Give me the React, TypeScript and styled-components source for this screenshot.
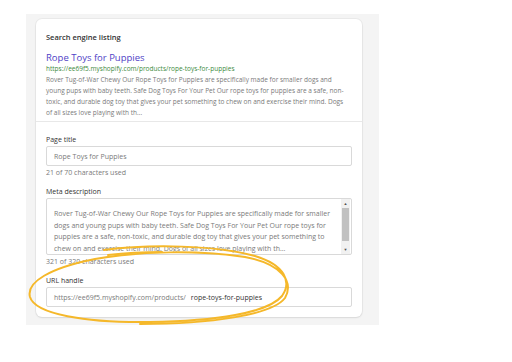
import { FC } from "react";
import styled, { createGlobalStyle } from "styled-components";

const GlobalStyle = createGlobalStyle`
  body {
    margin: 0;
    background: #ffffff;
    font-family: "Open Sans", "Liberation Sans", sans-serif;
  }
`;

const descLines = [
  "Rover Tug-of-War Chewy Our Rope Toys for Puppies are specifically made for smaller dogs and",
  "young pups with baby teeth. Safe Dog Toys For Your Pet Our rope toys for puppies are a safe, non-",
  "toxic, and durable dog toy that gives your pet something to chew on and exercise their mind. Dogs",
  "of all sizes love playing with th...",
];

const metaLines = [
  "Rover Tug-of-War Chewy Our Rope Toys for Puppies are specifically made for smaller",
  "dogs and young pups with baby teeth. Safe Dog Toys For Your Pet Our rope toys for",
  "puppies are a safe, non-toxic, and durable dog toy that gives your pet something to",
  "chew on and exercise their mind. Dogs of all sizes love playing with th...",
];

const App: FC = () => {
  return (
    <Page>
      <GlobalStyle />
      <Panel>
        <Card>
          <Preview>
            <Heading>Search engine listing</Heading>
            <PreviewTitle>Rope Toys for Puppies</PreviewTitle>
            <PreviewUrl>https://ee69f5.myshopify.com/products/rope-toys-for-puppies</PreviewUrl>
            <PreviewDesc>
              {descLines.map((l) => (
                <div key={l}>{l}</div>
              ))}
            </PreviewDesc>
          </Preview>
          <Form>
            <Field>
              <Label>Page title</Label>
              <Input>Rope Toys for Puppies</Input>
              <Help>21 of 70 characters used</Help>
            </Field>
            <Field>
              <Label>Meta description</Label>
              <TextArea>
                <TextBody>
                  {metaLines.map((l) => (
                    <div key={l}>{l}</div>
                  ))}
                </TextBody>
                <ScrollTrack>
                  <Arrow>▲</Arrow>
                  <Thumb />
                  <Arrow>▼</Arrow>
                </ScrollTrack>
              </TextArea>
              <Help>321 of 320 characters used</Help>
            </Field>
            <Field>
              <Label>URL handle</Label>
              <Input>
                https://ee69f5.myshopify.com/products/
                <Handle>rope-toys-for-puppies</Handle>
              </Input>
            </Field>
          </Form>
        </Card>
      </Panel>
      <Scribble width="512" height="362" viewBox="0 0 512 362">
        <path
          d="M104 250 C150 244 215 245 255 256 C285 265 292 282 282 296 C268 313 215 321 150 322 C85 323 35 314 30 297 C26 282 50 268 95 259 C140 251 200 250 245 257 C282 264 294 282 285 298 C272 315 210 324 140 324"
          fill="none"
          stroke="#f5b82a"
          strokeWidth="2"
          strokeLinecap="round"
        />
        <path
          d="M108 255 C125 253 145 252 162 252"
          fill="none"
          stroke="#f5b82a"
          strokeWidth="2"
          strokeLinecap="round"
        />
      </Scribble>
    </Page>
  );
};

const Page = styled.div`
  position: relative;
  width: 512px;
  height: 362px;
  padding: 14px 0 0 26px;
  box-sizing: border-box;
`;

const Panel = styled.div`
  width: 353px;
  height: 311px;
  background: #f4f4f4;
  padding: 5px 0 0 10px;
  box-sizing: border-box;
`;

const Card = styled.div`
  width: 326px;
  height: 298px;
  background: #ffffff;
  border-radius: 6px;
  box-shadow: 0 0 0 1px rgba(0, 0, 0, 0.04), 0 1px 2px rgba(0, 0, 0, 0.08);
  box-sizing: border-box;
`;

const Preview = styled.div`
  padding: 12px 10px 3px;
  border-bottom: 1px solid #e8e8e8;
`;

const Heading = styled.div`
  font-size: 7.5px;
  font-weight: 600;
  color: #333333;
  line-height: 12px;
  margin-bottom: 9px;
`;

const PreviewTitle = styled.div`
  font-size: 9.5px;
  color: #4f42c6;
  line-height: 12px;
`;

const PreviewUrl = styled.div`
  font-size: 6.5px;
  color: #3d8a3d;
  line-height: 10px;
`;

const PreviewDesc = styled.div`
  font-size: 6.5px;
  color: #7a7a7a;
  line-height: 11px;
  white-space: nowrap;
`;

const Form = styled.div`
  display: flex;
  flex-direction: column;
  gap: 7px;
  padding: 12px 10px 0;
`;

const Field = styled.div`
  display: flex;
  flex-direction: column;
`;

const Label = styled.div`
  font-size: 7px;
  color: #333333;
  line-height: 12px;
`;

const Input = styled.div`
  height: 18px;
  border: 1px solid #d9d9d9;
  border-radius: 2px;
  padding: 0 7px;
  display: flex;
  align-items: center;
  font-size: 7px;
  color: #7a7a7a;
  white-space: nowrap;
`;

const Handle = styled.span`
  color: #333333;
  margin-left: 5px;
`;

const Help = styled.div`
  font-size: 7px;
  color: #7a7a7a;
  line-height: 12px;
  margin-top: 1px;
`;

const TextArea = styled.div`
  height: 55px;
  border: 1px solid #d9d9d9;
  border-radius: 2px;
  display: flex;
  overflow: hidden;
`;

const TextBody = styled.div`
  flex: 1;
  padding: 9px 7px 0;
  font-size: 7px;
  line-height: 11.5px;
  color: #7a7a7a;
  white-space: nowrap;
`;

const ScrollTrack = styled.div`
  width: 9px;
  margin-right: 1px;
  display: flex;
  flex-direction: column;
  align-items: stretch;
  background: #f1f1f1;
`;

const Arrow = styled.div`
  height: 9px;
  font-size: 4px;
  color: #505050;
  display: flex;
  align-items: center;
  justify-content: center;
`;

const Thumb = styled.div`
  flex: 1;
  background: #c1c1c1;
  margin: 0 1px 4px;
`;

const Scribble = styled.svg`
  position: absolute;
  left: 0;
  top: 0;
  pointer-events: none;
`;

export default App;
